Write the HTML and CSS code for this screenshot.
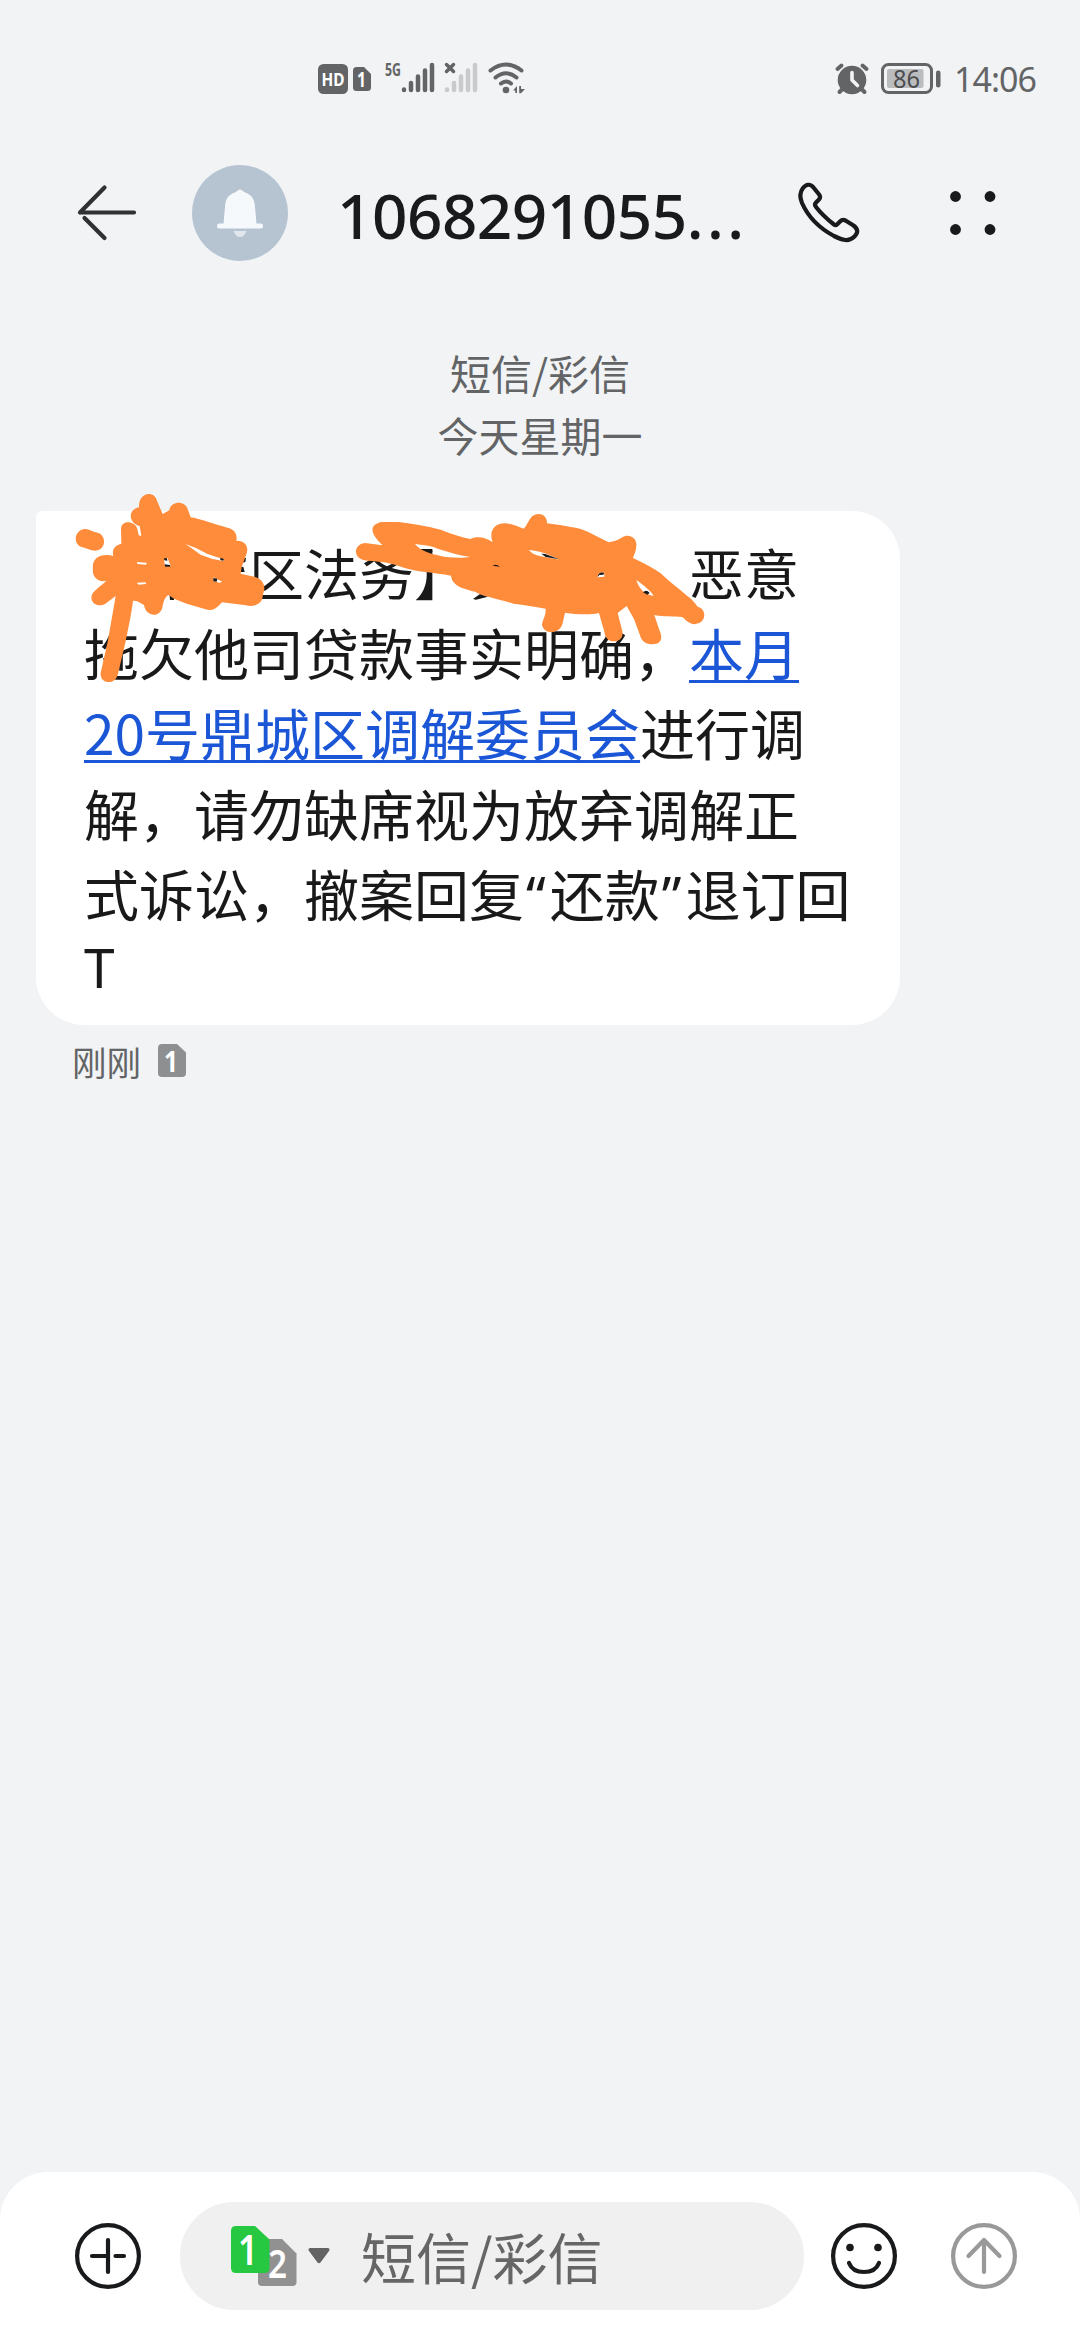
FILE: index.html
```html
<!DOCTYPE html>
<html lang="zh-CN">
<head>
<meta charset="utf-8">
<title>短信</title>
<link rel="stylesheet" href="styles.css">
</head>
<body>
<div class="screen">
  <div class="status">
    <div class="status-left">
      <svg class="hd" width="30" height="30" viewBox="0 0 30 30"><rect width="30" height="30" rx="5.5" fill="#636466"/><text class="badge-text" x="15" y="22" font-size="18" textLength="23" lengthAdjust="spacingAndGlyphs">HD</text></svg>
      <svg class="sim-small" width="18" height="24" viewBox="0 0 18 24"><path d="M3.500 0H11L18 7V20.500Q18 24 14.500 24H3.500Q0 24 0 20.500V3.500Q0 0 3.500 0Z" fill="#636466"/><text class="badge-text" x="8.500" y="19.500" font-size="21" textLength="9" lengthAdjust="spacingAndGlyphs">1</text></svg>
      <svg class="signal" width="50" height="32" viewBox="0 0 50 32"><text class="net" x="0" y="14" font-size="18" textLength="16" lengthAdjust="spacingAndGlyphs">5G</text><g stroke="#636466" stroke-width="4.500" stroke-linecap="round"><path d="M19 27.500V28M26 21V28M33 14.500V28M40 8.500V28M47 3V28"/></g></svg>
      <svg class="signal-off" width="34" height="32" viewBox="0 0 34 32"><g stroke="#c9cacc" stroke-width="4.500" stroke-linecap="round"><path d="M3 27.500V28M10 21V28M17 14.500V28M24 8.500V28M31 3V28"/></g><path d="M2.500 2.500L9.500 9.500M9.500 2.500L2.500 9.500" stroke="#636466" stroke-width="3.500" stroke-linecap="round"/></svg>
      <svg class="wifi" width="38" height="32" viewBox="0 0 38 32"><g fill="none" stroke="#636466" stroke-width="4" stroke-linecap="round"><path d="M2.500 8.500Q18 -3.500 33.500 8.500M7.500 15.500Q18 7 28.500 15.500M13 21.500Q18 17.500 23 21.500"/></g><circle cx="18" cy="28" r="3.300" fill="#636466"/><path d="M25 28.500L29 24V31H27.300V28.500ZM31.200 24H33V27H37L33 31.200H31.200Z" fill="#636466"/></svg>
    </div>
    <div class="status-right">
      <svg width="34" height="32" viewBox="0 0 34 32"><circle cx="17" cy="17" r="14.300" fill="#636466"/><path d="M2.500 6L6.500 2.500M31.500 6L27.500 2.500M4.500 29L8 25.500M29.500 29L26 25.500" stroke="#636466" stroke-width="4" stroke-linecap="round"/><path d="M17 9.500V17L22.500 22.500" fill="none" stroke="#f1f3f5" stroke-width="3.600" stroke-linecap="round" stroke-linejoin="round"/></svg>
      <svg width="60" height="32" viewBox="0 0 60 32"><rect x="1.500" y="1.500" width="49" height="28" rx="6" fill="none" stroke="#636466" stroke-width="3"/><rect x="6" y="6" width="36.500" height="19" rx="2" fill="#bbbcbe"/><rect x="55" y="7.500" width="4.500" height="17" rx="2.200" fill="#636466"/><text class="battery" x="12" y="24.500" font-size="25" textLength="27" lengthAdjust="spacingAndGlyphs">86</text></svg>
      <span class="clock">14:06</span>
    </div>
  </div>

  <header class="header">
    <svg class="back" width="62" height="58" viewBox="0 0 62 58"><path d="M3 28.500H57M3 28.500L27.500 3.500M7.500 34L27.500 54" fill="none" stroke="#303133" stroke-width="4.200" stroke-linecap="round"/></svg>
    <div class="avatar">
      <svg width="46" height="50" viewBox="0 0 46 50"><path d="M19 4Q23 -1 27 4C36 7 37.500 12 38 19L39.500 36H6.500L8 19C8.500 12 10 7 19 4Z" fill="#f6f9fc"/><rect y="35.500" width="46" height="5" rx="2.500" fill="#f6f9fc"/><path d="M16.500 43H29.500Q27 49 23 49T16.500 43Z" fill="#e1e7ed"/></svg>
    </div>
    <h1 class="title">1068291055<span class="dots">...</span></h1>
    <svg class="phone" width="62" height="62" viewBox="0 0 62 62"><path d="M5 6C8 2 12.500 1.500 15.500 5.500L21.500 13Q23 15.500 20.500 18L18 20.500Q16 22.500 18 25Q25 34 36 42.500Q37.500 44 39.500 42L42 39.500Q44.500 37 47.500 38.500L55.500 43.500C60 47 60.500 50.500 56.500 54.500C51 60 45 58.500 36 54C22 46.500 10 34.500 4 21C1.500 15 1.500 10.500 5 6Z" fill="none" stroke="#191a1c" stroke-width="4.200" stroke-linejoin="round"/></svg>
    <svg class="more" width="46" height="44" viewBox="0 0 46 44" fill="#191a1c"><circle cx="5.500" cy="5.500" r="5.400"/><circle cx="40" cy="5.500" r="5.400"/><circle cx="5.500" cy="38.500" r="5.400"/><circle cx="40" cy="38.500" r="5.400"/></svg>
  </header>

  <main class="thread">
    <div class="day"><div>短信/彩信</div><div>今天星期一</div></div>
    <div class="bubble">
      <p class="message">　　　区法务】　　　　恶意<br>拖欠他司贷款事实明确，<a class="link">本月</a><br><a class="link">20号鼎城区调解委员会</a>进行调<br>解，请勿缺席视为放弃调解正<br>式诉讼，撤案回复<span class="quote">“</span>还款<span class="quote">”</span>退订回</p>
      <p class="message tail">T</p>
      <svg class="scribble" width="660" height="200" viewBox="60 490 660 200">
        <g transform="translate(30 480) scale(.33333)">
          <path fill="#1a1a1a" d="M632 238L648 233L646 246L630 250ZM628 262L640 260L644 276L630 276ZM418 335H432V360H420Z"/>
          <path fill="#ff8c3a" fill-rule="evenodd" d="M160 148C175 144 188 157 203 158C229 165 228 205 203 211C187 215 172 205 155 201C130 193 131 155 160 148ZM327 82C325 35 373 32 380 60L398 102L418 91C423 62 466 60 474 90L482 112C515 117 556 134 592 143C615 147 623 165 619 182C648 181 656 203 650 220L635 262L632 281L676 291C704 302 708 322 698 345C700 371 672 383 648 376L576 367C562 381 553 394 532 389L470 371L432 356L416 345C405 350 401 363 398 377C394 414 348 413 342 375C330 367 320 361 309 362C305 395 296 440 286 488L264 581C257 617 209 613 212 579L234 481L257 348L230 368C205 388 173 365 188 340C196 328 215 316 229 302C204 309 185 290 189 265C185 238 208 221 239 226L250 228C244 208 257 194 274 192L273 145C277 119 314 123 322 146L326 166L334 168L329 138C298 131 290 90 327 82ZM466 192L498 204L531 221L557 230L582 238L579 243L545 236L512 224L484 204ZM321 246L349 248L349 254L322 252ZM402 239L413 235L422 259L405 260ZM320 308L347 307L348 312L326 314ZM550 292L577 305L568 308L550 303Z"/>
          <path fill="#1a1a1a" d="M402 235L411 235L412 242L403 241ZM404 253L420 255L421 260L405 260ZM550 294L562 296L560 305L550 304ZM571 233L582 237L579 242L571 240Z"/>
        </g>
        <g transform="translate(340 480) scale(.33333)">
          <path fill="#1a1a1a" d="M399 357L420 342L444 350L408 359Z"/>
          <path fill="#ff8c3a" fill-rule="evenodd" d="M123 126H176C220 131 263 139 302 149C333 161 365 172 391 177C412 168 435 171 458 187C446 157 461 130 494 130C516 130 534 140 551 146C561 136 566 120 575 110C594 94 622 103 621 130L660 135C682 140 704 142 720 146C752 157 781 175 806 187C823 184 834 180 845 173C867 159 891 174 889 197C889 212 882 223 879 234C911 249 939 263 962 280C989 306 1018 327 1041 347C1059 359 1066 371 1073 380C1098 385 1100 421 1075 430C1056 438 1042 425 1027 411C999 409 974 411 943 405L958 450C972 480 958 492 940 492C920 495 905 485 900 466L882 417L860 378L833 399L846 449C852 473 840 484 820 484C804 483 795 472 793 455L777 399C748 406 710 403 675 398L668 430C659 465 611 464 606 434C608 416 618 410 617 386C582 380 553 374 520 371C466 354 436 351 405 335C371 326 337 319 333 287C283 278 226 276 187 262C154 248 120 244 83 242C39 242 36 194 75 189L128 196C98 168 80 137 123 126ZM225 192C245 195 272 196 295 207C330 218 363 227 391 231C363 235 324 233 302 228C273 220 245 216 225 192ZM566 210C604 213 628 224 657 239C624 233 591 229 577 220ZM772 292Q776 273 793 279L793 290ZM889 300C913 317 934 334 941 348C917 343 899 332 889 300Z"/>
          <path fill="#1a1a1a" d="M258 211L276 210L278 216ZM604 221L616 222L657 238L617 231ZM458 257Q468 251 480 260ZM772 292Q776 273 793 279L790 284L778 285ZM909 337Q919 326 929 339L922 344Z"/>
        </g>
      </svg>
    </div>
    <div class="meta">
      <span>刚刚</span>
      <svg width="28" height="34" viewBox="0 0 28 34"><path d="M4 0H19L28 8.500V29Q28 33 24 33H4Q0 33 0 29V4Q0 0 4 0Z" fill="#8e8f91"/><text class="badge-text" x="13" y="28" font-size="29" textLength="14" lengthAdjust="spacingAndGlyphs">1</text></svg>
    </div>
  </main>

  <footer class="composer">
    <svg class="plus" width="66" height="66" viewBox="0 0 66 66" fill="none" stroke="#191a1c" stroke-width="4.200" stroke-linecap="round"><circle cx="33" cy="33" r="30.900"/><path d="M33 17V49M17 33H33M40.500 33H49"/></svg>
    <div class="input">
      <svg class="sims" width="66" height="60" viewBox="0 0 66 60"><path d="M31 13H51L65.500 27.500V56Q65.500 60 61.500 60H31Q27 60 27 56V17Q27 13 31 13Z" fill="#919191"/><path d="M5 0H24L38.500 13.500V42Q38.500 47 33.500 47H5Q0 47 0 42V5Q0 0 5 0Z" fill="#25c840"/><text class="badge-text thin" x="17" y="39" font-size="41" textLength="20" lengthAdjust="spacingAndGlyphs">1</text><text class="badge-text thin" x="46.500" y="52" font-size="39" textLength="19" lengthAdjust="spacingAndGlyphs">2</text></svg>
      <svg class="caret" width="22" height="16" viewBox="0 0 22 16"><path d="M2 0H20Q22.500 1 21 3L12.500 14.500Q11 16 9.500 14.500L1 3Q-.500 1 2 0Z" fill="#636363"/></svg>
      <span class="placeholder">短信/彩信</span>
    </div>
    <svg class="smile" width="66" height="66" viewBox="0 0 66 66"><g fill="none" stroke="#191a1c" stroke-width="4.200" stroke-linecap="round"><circle cx="33" cy="33" r="30.900"/><path d="M18 40Q21.500 49 33 49T48 40"/></g><circle cx="19" cy="24.500" r="3.800" fill="#191a1c"/><circle cx="47" cy="24.500" r="3.800" fill="#191a1c"/></svg>
    <svg class="send" width="66" height="66" viewBox="0 0 66 66" fill="none" stroke="#999" stroke-width="4.200" stroke-linecap="round" stroke-linejoin="round"><circle cx="33" cy="33" r="30.900"/><path d="M33 49V17M17.500 33L33 17L48.500 33"/></svg>
  </footer>
</div>
</body>
</html>
```

FILE: styles.css
```css
* { box-sizing: border-box; }
body, h1, p { margin: 0; }
svg { display: block; flex: none; overflow: visible; }
body {
  background: #f1f3f5;
  color: #191a1c;
  font-family: "Noto Sans CJK SC", sans-serif;
}
.screen {
  width: 1080px;
  height: 2340px;
  display: flex;
  flex-direction: column;
  overflow: hidden;
}

/* Status bar */
.status {
  height: 144px;
  flex: none;
  display: flex;
  justify-content: space-between;
  padding: 63px 43px 0 318px;
}
.status-left, .status-right { display: flex; align-items: flex-start; }
.hd { margin-top: 1px; }
.sim-small { margin: 4px 0 0 5px; }
.signal { margin: -1px 0 0 14px; }
.signal-off { margin: -1px 0 0 9px; }
.wifi { margin: -1px 0 0 10px; }
.status-right { gap: 12px; }
.clock {
  width: 83px;
  margin: -1px 0 0 1px;
  font: 34px/34px "Noto Sans", sans-serif;
  letter-spacing: -1px;
  color: #636466;
  white-space: nowrap;
}
.badge-text {
  font-family: "Noto Sans", sans-serif;
  font-weight: 700;
  fill: #fff;
  text-anchor: middle;
}
.thin { font-weight: 600; }
.net { font-family: "Noto Sans", sans-serif; font-weight: 700; fill: #636466; }
.battery { font-family: "Noto Sans", sans-serif; fill: #4c4d4f; }

/* Conversation header */
.header {
  height: 138px;
  flex: none;
  display: flex;
  align-items: center;
  padding-left: 77px;
}
.avatar {
  width: 96px;
  height: 96px;
  margin-left: 53px;
  border-radius: 50%;
  background: #b6c4d2;
  display: flex;
  align-items: center;
  justify-content: center;
}
.title {
  width: 412px;
  margin-left: 49px;
  padding-top: 3px;
  font: 500 62px/84px "Noto Sans", sans-serif;
  letter-spacing: -.5px;
  white-space: nowrap;
}
.dots { letter-spacing: 3.5px; }
.phone { margin-left: 49px; margin-right: 90px; }

/* Messages */
.thread { flex: 1; padding-top: 59px; }
.day {
  text-align: center;
  font-size: 41px;
  line-height: 62px;
  color: #636466;
}
.bubble {
  position: relative;
  width: 864px;
  height: 514px;
  margin: 46px 0 0 36px;
  padding: 20px 0 0 48px;
  border-radius: 6px 48px 48px 48px;
  background: #fff;
}
.message {
  font-size: 55px;
  line-height: 80.2px;
  white-space: nowrap;
  text-spacing-trim: space-all;
  color: #191919;
}
.tail { line-height: 69px; font-family: "Noto Sans", sans-serif; }
.link {
  color: #1a56d6;
  text-decoration: underline;
  text-decoration-thickness: 3px;
  text-underline-offset: 5px;
  text-decoration-skip-ink: none;
}
.quote { padding: 0 4px 0 2px; font-family: "Noto Sans", sans-serif; line-height: 0; }
.scribble { position: absolute; left: 24px; top: -21px; }
.meta {
  display: flex;
  align-items: center;
  gap: 17px;
  margin: 11px 0 0 72px;
  font-size: 34.500px;
  line-height: 50px;
  color: #636466;
}

/* Composer */
.composer {
  height: 168px;
  flex: none;
  display: flex;
  align-items: flex-start;
  padding: 30px 63px 0 75px;
  border-radius: 48px 48px 0 0;
  background: #fff;
}
.plus, .smile, .send { margin-top: 21px; }
.input {
  width: 624px;
  height: 108px;
  margin: 0 27px 0 39px;
  padding-left: 51px;
  border-radius: 54px;
  background: #f0f0f1;
  display: flex;
  align-items: center;
}
.caret { margin: 0 0 0 11px; }
.placeholder { margin: -3px 0 0 31px; font-size: 55px; line-height: 80px; color: #666; }
.send { margin-left: 54px; }
```
